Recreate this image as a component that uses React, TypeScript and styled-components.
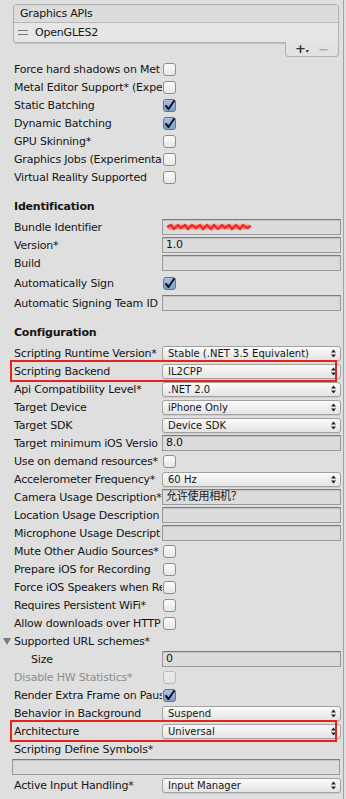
import React from "react";
import styled, { createGlobalStyle, css } from "styled-components";

const GlobalStyle = createGlobalStyle`
  html, body {
    margin: 0;
    padding: 0;
    background: #dfdfdf;
  }
  body {
    font-family: "DejaVu Sans", "Noto Sans CJK SC", sans-serif;
    font-size: 11px;
    letter-spacing: -0.2px;
    color: #151515;
  }
`;

type RowItem =
  | { kind: "check"; label: string; checked?: boolean; disabled?: boolean; mt?: number }
  | { kind: "text"; label: string; value?: string; redacted?: boolean; mt?: number; indent?: number }
  | { kind: "select"; label: string; value: string; mt?: number; highlight?: boolean }
  | { kind: "label"; label: string; mt?: number; foldout?: boolean };

// labels are cut where the inspector cuts them
const GRAPHICS: RowItem[] = [
  { kind: "check", label: "Force hard shadows on Met" },
  { kind: "check", label: "Metal Editor Support* (Expe" },
  { kind: "check", label: "Static Batching", checked: true },
  { kind: "check", label: "Dynamic Batching", checked: true },
  { kind: "check", label: "GPU Skinning*" },
  { kind: "check", label: "Graphics Jobs (Experimenta" },
  { kind: "check", label: "Virtual Reality Supported" },
];

const IDENTIFICATION: RowItem[] = [
  { kind: "text", label: "Bundle Identifier", redacted: true },
  { kind: "text", label: "Version*", value: "1.0" },
  { kind: "text", label: "Build" },
  { kind: "check", label: "Automatically Sign", checked: true, mt: 2 },
  { kind: "text", label: "Automatic Signing Team ID", mt: 2 },
];

const CONFIGURATION: RowItem[] = [
  { kind: "select", label: "Scripting Runtime Version*", value: "Stable (.NET 3.5 Equivalent)" },
  { kind: "select", label: "Scripting Backend", value: "IL2CPP", highlight: true },
  { kind: "select", label: "Api Compatibility Level*", value: ".NET 2.0" },
  { kind: "select", label: "Target Device", value: "iPhone Only" },
  { kind: "select", label: "Target SDK", value: "Device SDK" },
  { kind: "text", label: "Target minimum iOS Versio", value: "8.0" },
  { kind: "check", label: "Use on demand resources*" },
  { kind: "select", label: "Accelerometer Frequency*", value: "60 Hz" },
  { kind: "text", label: "Camera Usage Description*", value: "允许使用相机？" },
  { kind: "text", label: "Location Usage Description" },
  { kind: "text", label: "Microphone Usage Descript" },
  { kind: "check", label: "Mute Other Audio Sources*" },
  { kind: "check", label: "Prepare iOS for Recording" },
  { kind: "check", label: "Force iOS Speakers when Re" },
  { kind: "check", label: "Requires Persistent WiFi*" },
  { kind: "check", label: "Allow downloads over HTTP" },
  { kind: "label", label: "Supported URL schemes*", foldout: true },
  { kind: "text", label: "Size", value: "0", indent: 17 },
  { kind: "check", label: "Disable HW Statistics*", disabled: true },
  { kind: "check", label: "Render Extra Frame on Paus", checked: true },
  { kind: "select", label: "Behavior in Background", value: "Suspend" },
  { kind: "select", label: "Architecture", value: "Universal", highlight: true },
];

const CheckMark = () => (
  <svg width="11" height="11" viewBox="0 0 11 11">
    <path d="M2 6 L4.5 9 L10 1" fill="none" stroke="#111" strokeWidth="2" strokeLinecap="round" strokeLinejoin="round" />
  </svg>
);

const UpDown = () => (
  <svg width="5" height="9" viewBox="0 0 5 9">
    <path d="M0 3.5 L2.5 0.5 L5 3.5 Z M0 5.5 L2.5 8.5 L5 5.5 Z" fill="#222" />
  </svg>
);

const Scribble = () => (
  <svg width="86" height="10" viewBox="0 0 86 10">
    <path d="M2 5 L84 5" stroke="#f55a50" strokeWidth="5" opacity="0.6" />
    <path
      d="M1 5 L5 3 L8 7 L12 3 L15 6 L19 3 L22 7 L26 3 L30 6 L34 3 L37 7 L41 3 L45 7 L48 3 L52 7 L56 3 L59 6 L63 3 L66 7 L70 3 L74 7 L77 3 L81 6 L85 4"
      fill="none"
      stroke="#ee2a22"
      strokeWidth="2.2"
    />
  </svg>
);

const App: React.FC = () => {
  const renderRow = (r: RowItem) => {
    if (r.kind === "check") {
      return (
        <Row key={r.label} $mt={r.mt}>
          <Label $disabled={r.disabled}>{r.label}</Label>
          <Checkbox $checked={r.checked} $disabled={r.disabled}>
            {r.checked && <CheckMark />}
          </Checkbox>
        </Row>
      );
    }
    if (r.kind === "text") {
      return (
        <Row key={r.label} $mt={r.mt}>
          <Label $indent={r.indent}>{r.label}</Label>
          <TextField>{r.redacted ? <Scribble /> : r.value}</TextField>
        </Row>
      );
    }
    if (r.kind === "select") {
      return (
        <Row key={r.label} $mt={r.mt}>
          <Label>{r.label}</Label>
          <Select>
            <span>{r.value}</span>
            <UpDown />
          </Select>
          {r.highlight && <Highlight />}
        </Row>
      );
    }
    return (
      <Row key={r.label} $mt={r.mt}>
        {r.foldout && <Foldout />}
        <Label>{r.label}</Label>
      </Row>
    );
  };

  return (
    <>
      <GlobalStyle />
      <Panel>
        <ListBox>
          <ListHeader>Graphics APIs</ListHeader>
          <ListItem>
            <Handle />
            OpenGLES2
          </ListItem>
        </ListBox>
        <ListFooter>
          <FooterButton $strong>
            +<small>▾</small>
          </FooterButton>
          <FooterButton>−</FooterButton>
        </ListFooter>
        <Section $mt={3}>{GRAPHICS.map(renderRow)}</Section>
        <SectionTitle>Identification</SectionTitle>
        <Section $mt={2}>{IDENTIFICATION.map(renderRow)}</Section>
        <SectionTitle>Configuration</SectionTitle>
        <Section $mt={2}>{CONFIGURATION.map(renderRow)}</Section>
        <Row>
          <Label>Scripting Define Symbols*</Label>
        </Row>
        <WideField />
        <Row>
          <Label>Active Input Handling*</Label>
          <Select>
            <span>Input Manager</span>
            <UpDown />
          </Select>
        </Row>
      </Panel>
    </>
  );
};

export default App;

const Panel = styled.div`
  width: 344px;
  min-height: 799px;
  box-sizing: border-box;
  border-right: 1px solid #a3a3a3;
  padding: 4px 0 0 0;
`;

const ListBox = styled.div`
  margin: 0 4px 0 13px;
  border: 1px solid #b0b0b0;
  border-radius: 4px;
  background: #e2e2e2;
  box-shadow: 0 1px 1px rgba(0, 0, 0, 0.15);
  overflow: hidden;
`;

const ListHeader = styled.div`
  height: 17px;
  line-height: 17px;
  padding-left: 6px;
  background: #dcdcdc;
  border-bottom: 1px solid #b8b8b8;
`;

const ListItem = styled.div`
  height: 19px;
  display: flex;
  align-items: center;
  gap: 7px;
  padding-left: 4px;
  background: #e6e6e6;
`;

const Handle = styled.span`
  width: 10px;
  height: 3px;
  border-top: 1px solid #777;
  border-bottom: 1px solid #777;
`;

const ListFooter = styled.div`
  margin: -1px 4px 0 auto;
  width: 54px;
  height: 15px;
  box-sizing: border-box;
  border: 1px solid #b0b0b0;
  border-top: none;
  border-radius: 0 0 4px 4px;
  background: #e2e2e2;
  display: flex;
  align-items: center;
  justify-content: space-around;
  padding: 0 4px;
`;

const FooterButton = styled.span<{ $strong?: boolean }>`
  font-size: 13px;
  line-height: 13px;
  color: ${(p) => (p.$strong ? "#333" : "#999")};
  font-weight: ${(p) => (p.$strong ? "bold" : "normal")};
  small {
    font-size: 6px;
  }
`;

const Section = styled.div<{ $mt?: number }>`
  margin-top: ${(p) => p.$mt ?? 0}px;
`;

const SectionTitle = styled.div`
  height: 18px;
  line-height: 18px;
  margin-top: 12px;
  padding-left: 14px;
  font-weight: bold;
`;

const Row = styled.div<{ $mt?: number }>`
  position: relative;
  display: grid;
  grid-template-columns: 148px 1fr;
  align-items: center;
  height: 18px;
  margin-top: ${(p) => p.$mt ?? 0}px;
  padding: 0 2px 0 14px;
`;

const Label = styled.div<{ $disabled?: boolean; $indent?: number }>`
  white-space: nowrap;
  overflow: hidden;
  padding-left: ${(p) => p.$indent ?? 0}px;
  color: ${(p) => (p.$disabled ? "#8e8e8e" : "#151515")};
`;

const Foldout = styled.span`
  position: absolute;
  left: 3px;
  top: 6px;
  width: 0;
  height: 0;
  border-left: 4px solid transparent;
  border-right: 4px solid transparent;
  border-top: 7px solid #7a7a7a;
`;

const Checkbox = styled.div<{ $checked?: boolean; $disabled?: boolean }>`
  width: 13px;
  height: 13px;
  margin-left: 1px;
  box-sizing: border-box;
  border-radius: 3px;
  border: 1px solid #8e8e8e;
  display: flex;
  align-items: center;
  justify-content: center;
  background: linear-gradient(#fdfdfd, #e6e6e6);
  ${(p) =>
    p.$checked &&
    css`
      background: linear-gradient(#a9c0e4, #7f9fcf);
      border-color: #5f7392;
    `}
  ${(p) =>
    p.$disabled &&
    css`
      opacity: 0.45;
    `}
`;

const fieldBox = css`
  height: 16px;
  box-sizing: border-box;
  border: 1px solid #9a9a9a;
  border-top-color: #7c7c7c;
  background: #dcdcdc;
  box-shadow: inset 0 1px 1px rgba(0, 0, 0, 0.12);
  padding: 0 3px;
  line-height: 14px;
  white-space: nowrap;
  overflow: hidden;
`;

const TextField = styled.div`
  ${fieldBox}
  display: flex;
  align-items: center;
`;

const WideField = styled.div`
  ${fieldBox}
  margin: 1px 3px 1px 12px;
`;

const Select = styled.div`
  height: 15px;
  box-sizing: border-box;
  border: 1px solid #a2a2a2;
  border-radius: 3px;
  background: linear-gradient(#fafafa, #e4e4e4);
  box-shadow: 0 1px 0 rgba(0, 0, 0, 0.08);
  display: flex;
  align-items: center;
  justify-content: space-between;
  padding: 0 4px 0 5px;
  font-size: 10px;
  letter-spacing: 0;
  white-space: nowrap;
`;

const Highlight = styled.div`
  position: absolute;
  left: 10px;
  right: 6px;
  top: -2px;
  bottom: -2px;
  border: 2px solid #e8231e;
  pointer-events: none;
`;
